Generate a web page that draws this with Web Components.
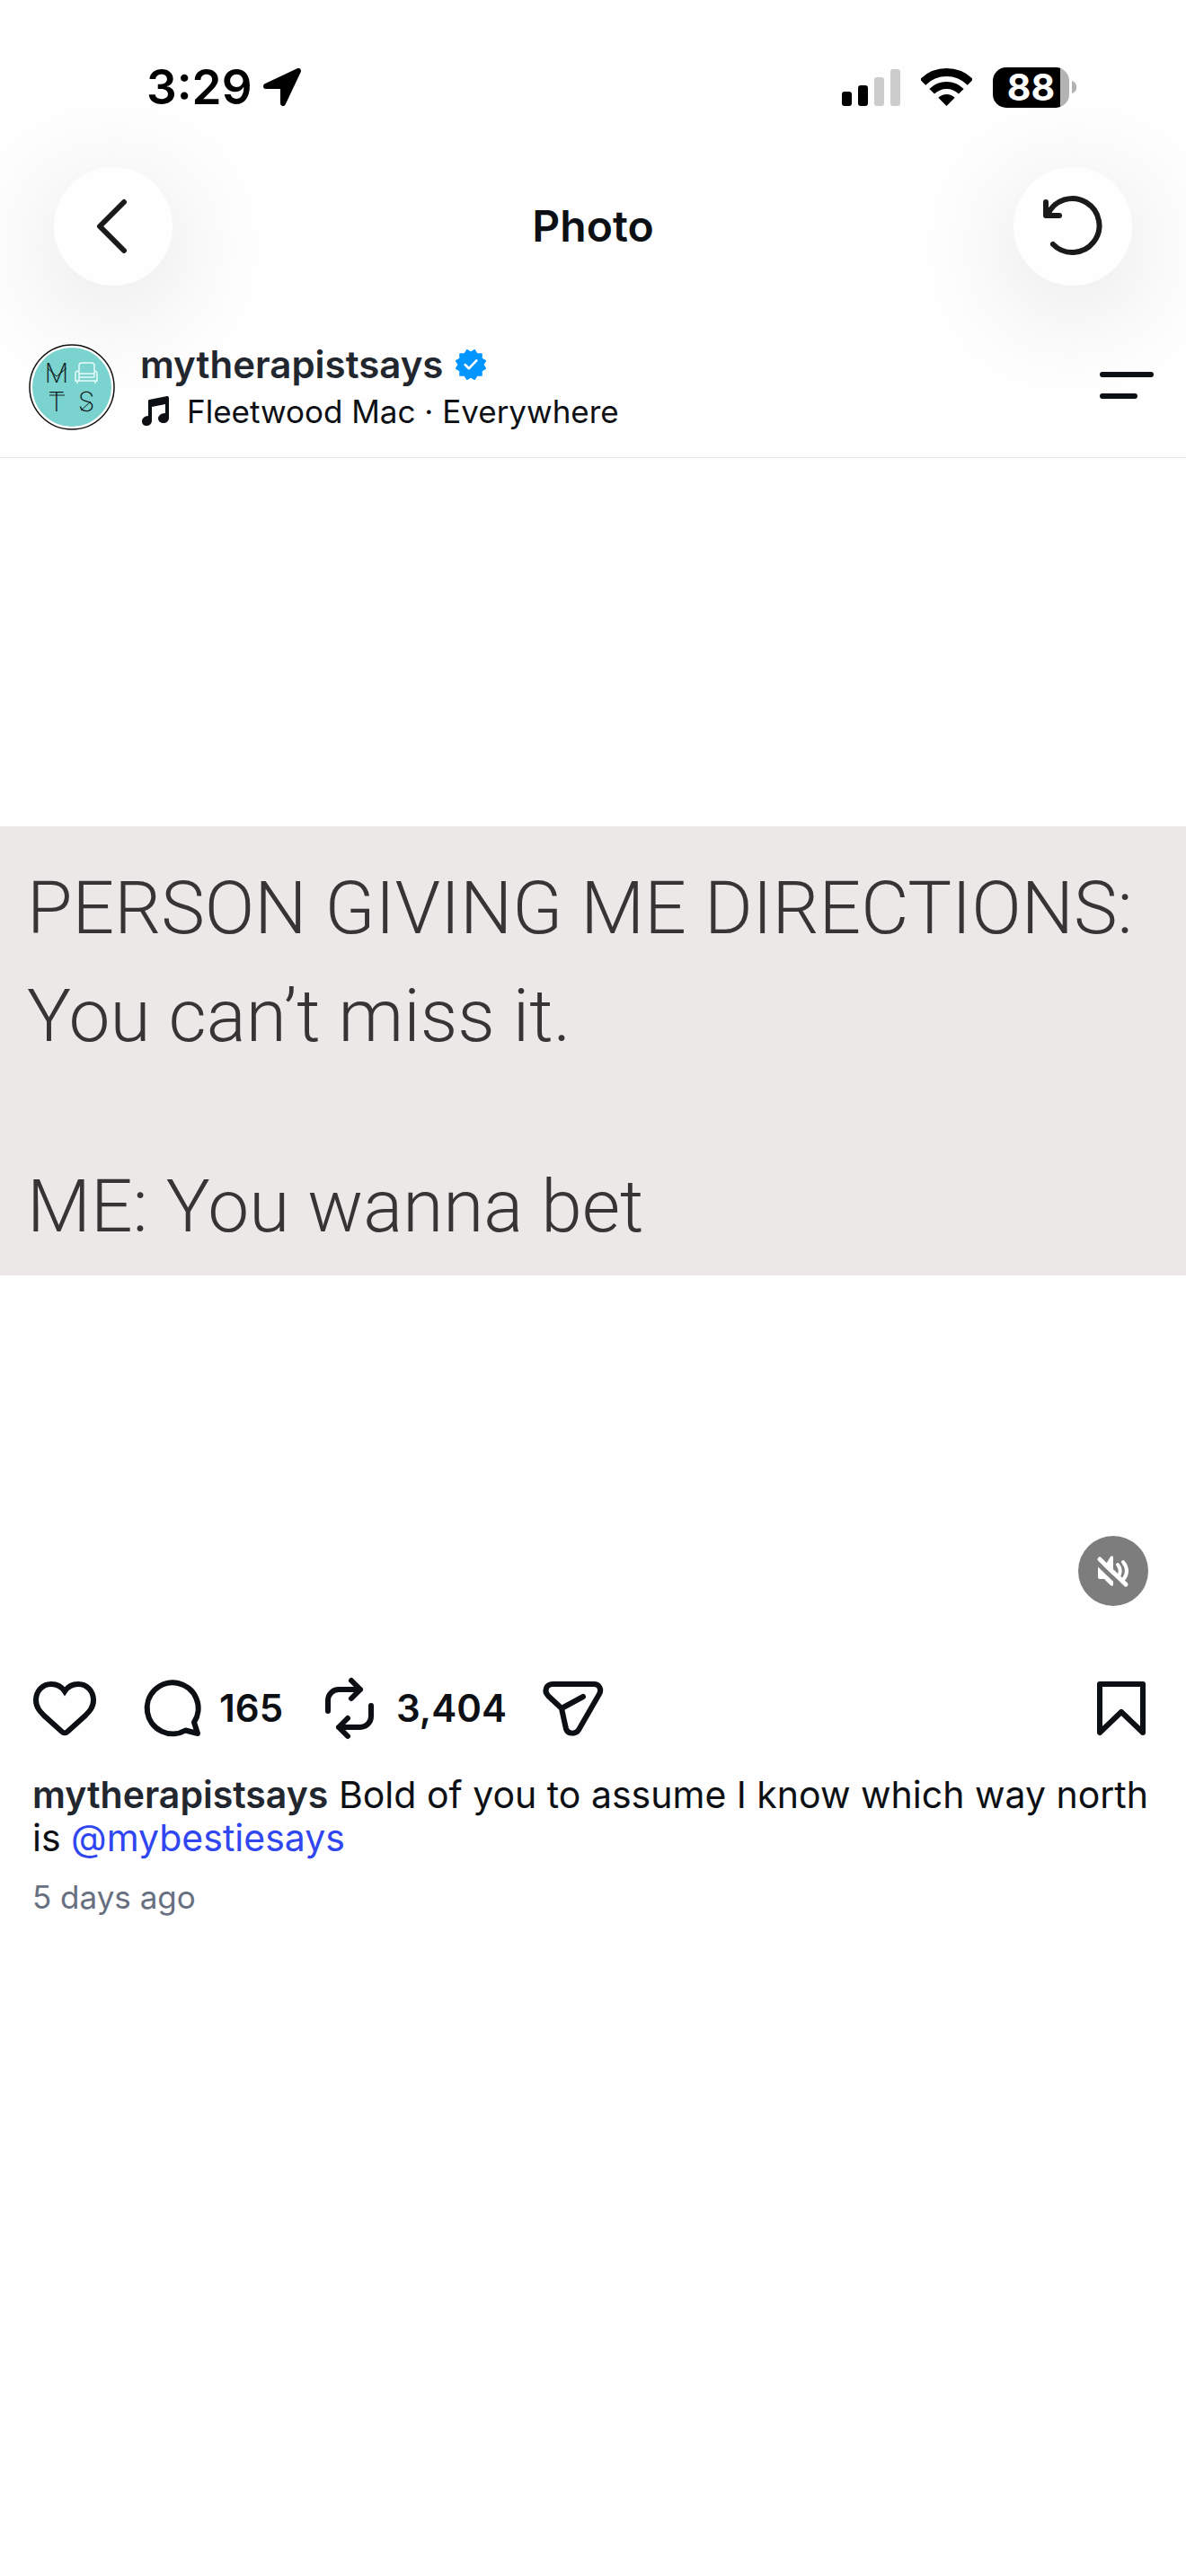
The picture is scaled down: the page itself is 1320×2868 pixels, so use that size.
<!DOCTYPE html>
<html lang="en">
<head>
<meta charset="UTF-8">
<meta name="viewport" content="width=device-width, initial-scale=1">
<title>Photo</title>
<style>
  body {
    margin: 0;
    background: #fefefe;
    color: #0c1014;
    font-family: Inter, "Liberation Sans", sans-serif;
  }
</style>
</head>
<body>
<photo-page></photo-page>

<script>
const ICONS = {
  back: '<path d="M42 15 15 42l27 27"/>',
  reload: '<path d="M12 15v15h15M14 29A30 30 0 1 1 20 62"/>',
  menu: '<path d="M9 24h54M9 48h36"/>',
  heart: '<path stroke-linejoin="miter" d="M36 17C32 11 26 9 21 9 11 9 4 17 4 27c0 8 5 13 9 17l20 18a4 4 0 0 0 6 0l20-18c4-4 9-9 9-17C68 17 61 9 51 9c-5 0-11 2-15 8z"/>',
  comment: '<path d="M60 51.500A28.500 28.500 0 1 0 50.500 60.500L64 64z"/>',
  repost: '<path d="M12 39V27a12 12 0 0 1 12-12h24M38 5l10 10-10 10M60 33v12a12 12 0 0 1-12 12H24M34 47 24 57l10 10"/>',
  share: '<path d="M13 9h46c6 0 9 6 6 11L42 60c-3 5-12 5-14-1l-5-23L8 22C3 17 6 9 13 9zM23 36l24-13"/>',
  save: '<path d="M12 9h48v54L36 40 12 63z"/>'
};

class AppIcon extends HTMLElement {
  constructor() {
    super();
    this.attachShadow({ mode: 'open' });
  }

  connectedCallback() {
    const box = this.getAttribute('box') || '0 0 72 72';
    this.shadowRoot.innerHTML = `
      <style>
        :host { display: block; flex: none; width: 72px; height: 72px; }
        svg {
          display: block;
          width: 100%;
          height: 100%;
          overflow: visible;
          fill: none;
          stroke: currentColor;
          stroke-width: 6;
          stroke-linecap: round;
          stroke-linejoin: round;
        }
      </style>
      <svg viewBox="${box}" aria-hidden="true">${ICONS[this.getAttribute('name')]}</svg>
    `;
  }
}

class StatusBar extends HTMLElement {
  constructor() {
    super();
    this.attachShadow({ mode: 'open' });
    this.shadowRoot.innerHTML = `
      <style>
        :host {
          display: flex;
          justify-content: space-between;
          align-items: center;
          height: 64px;
          padding: 65px 122px 57px 163px;
          color: #000;
        }
        .left, .right { display: flex; align-items: center; }
        .left { gap: 12px; }
        .right { gap: 23px; }
        .time { font-size: 53px; line-height: 64px; font-weight: 600; }
        svg { display: block; }
        .power { display: flex; align-items: center; gap: 3px; }
        .battery {
          width: 85px;
          height: 45px;
          border-radius: 15px;
          background: linear-gradient(90deg, #000 75px, #b3b3b3 75px);
          color: #fff;
          font-size: 41px;
          line-height: 45px;
          font-weight: 700;
          text-align: center;
        }
      </style>
      <div class="left">
        <span class="time">3:29</span>
        <svg width="42" height="42" viewBox="0 0 42 42" stroke="#000" stroke-width="6" stroke-linejoin="round"><path d="M3 20 39 3 22 39V20z"/></svg>
      </div>
      <div class="right">
        <svg width="65" height="42" viewBox="0 0 65 42">
          <rect y="26" width="11" height="16" rx="3"/>
          <rect x="18" y="19" width="11" height="23" rx="3"/>
          <rect x="36" y="10" width="11" height="32" rx="3" fill="#ccc"/>
          <rect x="54" y="1" width="11" height="41" rx="3" fill="#ccc"/>
        </svg>
        <svg width="57" height="42" viewBox="0 0 57 42">
          <g fill="none" stroke="#000">
            <path stroke-width="9" d="M2 15.500a37.500 37.500 0 0 1 53 0"/>
            <path stroke-width="8" d="M12.200 25.700a23 23 0 0 1 32.600 0"/>
          </g>
          <path d="M28.500 42 19.300 32.800a13 13 0 0 1 18.400 0z"/>
        </svg>
        <div class="power">
          <div class="battery">88</div>
          <svg width="5" height="14" viewBox="0 0 5 14"><path fill="#b3b3b3" d="M0 0c7 2 7 12 0 14z"/></svg>
        </div>
      </div>
    `;
  }
}

class NavBar extends HTMLElement {
  constructor() {
    super();
    this.attachShadow({ mode: 'open' });
    this.shadowRoot.innerHTML = `
      <style>
        :host {
          display: flex;
          justify-content: space-between;
          align-items: center;
          padding: 0 60px;
        }
        h1 { margin: 0; font-size: 48px; line-height: 60px; font-weight: 600; }
        button {
          display: flex;
          align-items: center;
          justify-content: center;
          width: 132px;
          height: 132px;
          padding: 0;
          border: 0;
          border-radius: 50%;
          background: #fefefe;
          color: #1a1a1a;
          box-shadow: 0 24px 120px rgba(0, 0, 0, 0.12);
          cursor: pointer;
        }
        app-icon { width: 84px; height: 84px; }
      </style>
      <button aria-label="Back"><app-icon name="back" box="-12 0 84 84"></app-icon></button>
      <h1><slot></slot></h1>
      <button aria-label="Reload"><app-icon name="reload" box="0 0 84 84"></app-icon></button>
    `;
  }
}

class ProfileAvatar extends HTMLElement {
  constructor() {
    super();
    this.attachShadow({ mode: 'open' });
    this.shadowRoot.innerHTML = `
      <style>
        :host { display: block; flex: none; width: 96px; height: 96px; }
        svg { display: block; }
        text { font: 200 30px Inter, "Liberation Sans", sans-serif; text-anchor: middle; fill: #10201f; }
      </style>
      <svg width="96" height="96" viewBox="0 0 96 96">
        <circle cx="48" cy="48" r="47" fill="#fff" stroke="#111" stroke-width="1.500"/>
        <circle cx="48" cy="48" r="44" fill="#7ad3ce"/>
        <text x="31" y="43">M</text>
        <text x="31" y="75">T</text>
        <text x="64" y="75">S</text>
        <path fill="none" stroke="#10201f" d="M21 27l10 9 11-9M23 57h17M58 74l11-10"/>
        <g fill="none" stroke="#e9fbfa" stroke-width="1.500">
          <path d="M56 30v-6q0-3 3-3h11q3 0 3 3v6M56 33h17M56 37h17M56 33v-2q-4-2-4 2v8h24v-8q0-4-3-2v6M56 33v8M54 41v3M74 41v3"/>
        </g>
      </svg>
    `;
  }
}

class PostHeader extends HTMLElement {
  constructor() {
    super();
    this.attachShadow({ mode: 'open' });
    this.shadowRoot.innerHTML = `
      <style>
        :host {
          display: flex;
          align-items: center;
          gap: 28px;
          padding: 61px 36px 26px 32px;
          border-bottom: 1px solid #e6e6e6;
        }
        .info { flex: 1; min-width: 0; }
        .row { display: flex; align-items: center; }
        .name { gap: 14px; font-size: 42px; line-height: 54px; font-weight: 600; }
        .song { gap: 16px; font-size: 35px; line-height: 50px; }
        a { color: inherit; text-decoration: none; }
        .name a { color: #22272f; }
        svg { display: block; flex: none; }
        button { padding: 0; border: 0; background: none; color: inherit; cursor: pointer; }
        app-icon { width: 60px; height: 60px; }
      </style>
      <profile-avatar></profile-avatar>
      <div class="info">
        <div class="row name">
          <a href="#profile"><slot name="user"></slot></a>
          <svg width="34" height="34" viewBox="0 0 40 40" aria-label="Verified">
            <path fill="#0095ff" stroke="#0095ff" stroke-width="2" stroke-linejoin="round" d="M20 4 15 1l-3 5H6v6l-5 3 3 5-3 5 5 3v6h6l3 5 5-3 5 3 3-5h6v-6l5-3-3-5 3-5-5-3V6h-6l-3-5z"/>
            <path fill="none" stroke="#fff" stroke-width="3" stroke-linecap="round" stroke-linejoin="round" d="M12.500 20l5 5L27.500 14.500"/>
          </svg>
        </div>
        <div class="row song">
          <svg width="36" height="34" viewBox="-2 0 36 34" aria-hidden="true">
            <path d="M7 5Q7 4 8 4L28 0q2 0 2 2v22c0 4-3 6-6 6s-6-2-6-5 3-6 8-6V9L11 12v15c0 4-3 6-6 6s-5-2-5-5 3-6 7-6z" fill="#0c1014"/>
          </svg>
          <a href="#song"><slot name="song"></slot></a>
        </div>
      </div>
      <button aria-label="More options"><app-icon name="menu" box="6 8 60 60"></app-icon></button>
    `;
  }
}

class PostMedia extends HTMLElement {
  constructor() {
    super();
    this.attachShadow({ mode: 'open' });
    this.shadowRoot.innerHTML = `
      <style>
        :host {
          position: relative;
          display: flex;
          align-items: center;
          aspect-ratio: 1;
        }
        .picture {
          display: flex;
          flex-direction: column;
          gap: 92px;
          width: 100%;
          padding: 31px 30px 17px;
          background: #ece8e7;
          color: #383435;
          font: 350 82px/120px Roboto, "Liberation Sans", sans-serif;
        }
        button {
          position: absolute;
          right: 42px;
          bottom: 42px;
          width: 78px;
          height: 78px;
          padding: 0;
          border: 0;
          border-radius: 50%;
          background: #7d7d7d;
          cursor: pointer;
        }
        svg { display: block; }
      </style>
      <div class="picture"><slot></slot></div>
      <button aria-label="Unmute">
        <svg width="78" height="78" viewBox="0 0 78 78" fill="none" stroke-linecap="round">
          <path fill="#fff" d="M22 35q0-2 2-2h6l6-10q3-2 3 1v30q0 3-3 1l-7-7h-5q-2 0-2-2z"/>
          <path stroke="#fff" stroke-width="4" d="M44 32q4 5 2 11M50 29q8 10 0 20"/>
          <path stroke="#7d7d7d" stroke-width="5" d="M20 29l31 30"/>
          <path stroke="#fff" stroke-width="5" d="M24 26l29 28"/>
        </svg>
      </button>
    `;
  }
}

class PostActions extends HTMLElement {
  constructor() {
    super();
    this.attachShadow({ mode: 'open' });
  }

  connectedCallback() {
    this.shadowRoot.innerHTML = `
      <style>
        :host {
          display: flex;
          align-items: center;
          gap: 38px;
          padding: 36px 36px 0;
        }
        button {
          display: flex;
          align-items: center;
          gap: 16px;
          padding: 0;
          border: 0;
          background: none;
          color: inherit;
          font: inherit;
          font-size: 42px;
          line-height: 48px;
          font-weight: 600;
          cursor: pointer;
        }
        .like { margin-right: 10px; }
        .save { margin-left: auto; }
      </style>
      <button class="like" aria-label="Like"><app-icon name="heart"></app-icon></button>
      <button><app-icon name="comment"></app-icon>${this.getAttribute('comments')}</button>
      <button><app-icon name="repost"></app-icon>${this.getAttribute('reposts')}</button>
      <button aria-label="Share"><app-icon name="share"></app-icon></button>
      <button class="save" aria-label="Save"><app-icon name="save"></app-icon></button>
    `;
  }
}

class PostCaption extends HTMLElement {
  constructor() {
    super();
    this.attachShadow({ mode: 'open' });
    this.shadowRoot.innerHTML = `
      <style>
        :host { display: block; padding: 36px; }
        p { margin: 0; font-size: 41px; line-height: 48px; }
        a { color: #22272f; font-weight: 600; text-decoration: none; }
        ::slotted(a) { color: #3046f1; text-decoration: none; }
        time { display: block; margin-top: 18px; color: #677080; font-size: 35px; line-height: 48px; }
      </style>
      <p><a href="#profile"><slot name="user"></slot></a> <slot></slot></p>
      <time><slot name="date"></slot></time>
    `;
  }
}

class PhotoPage extends HTMLElement {
  constructor() {
    super();
    this.attachShadow({ mode: 'open' });
    this.shadowRoot.innerHTML = `
      <style>
        :host { display: block; min-height: 100vh; overflow: hidden; }
      </style>
      <status-bar></status-bar>
      <nav-bar>Photo</nav-bar>
      <post-header>
        <span slot="user">mytherapistsays</span>
        <span slot="song">Fleetwood Mac · Everywhere</span>
      </post-header>
      <post-media>
        <div>
          <div>PERSON GIVING ME DIRECTIONS:</div>
          <div>You can’t miss it.</div>
        </div>
        <div>ME: You wanna bet</div>
      </post-media>
      <post-actions comments="165" reposts="3,404"></post-actions>
      <post-caption><span slot="user">mytherapistsays</span>Bold of you to assume I know which way north is <a href="#mention">@mybestiesays</a><span slot="date">5 days ago</span></post-caption>
    `;
  }
}

customElements.define('app-icon', AppIcon);
customElements.define('status-bar', StatusBar);
customElements.define('nav-bar', NavBar);
customElements.define('profile-avatar', ProfileAvatar);
customElements.define('post-header', PostHeader);
customElements.define('post-media', PostMedia);
customElements.define('post-actions', PostActions);
customElements.define('post-caption', PostCaption);
customElements.define('photo-page', PhotoPage);
</script>
</body>
</html>
